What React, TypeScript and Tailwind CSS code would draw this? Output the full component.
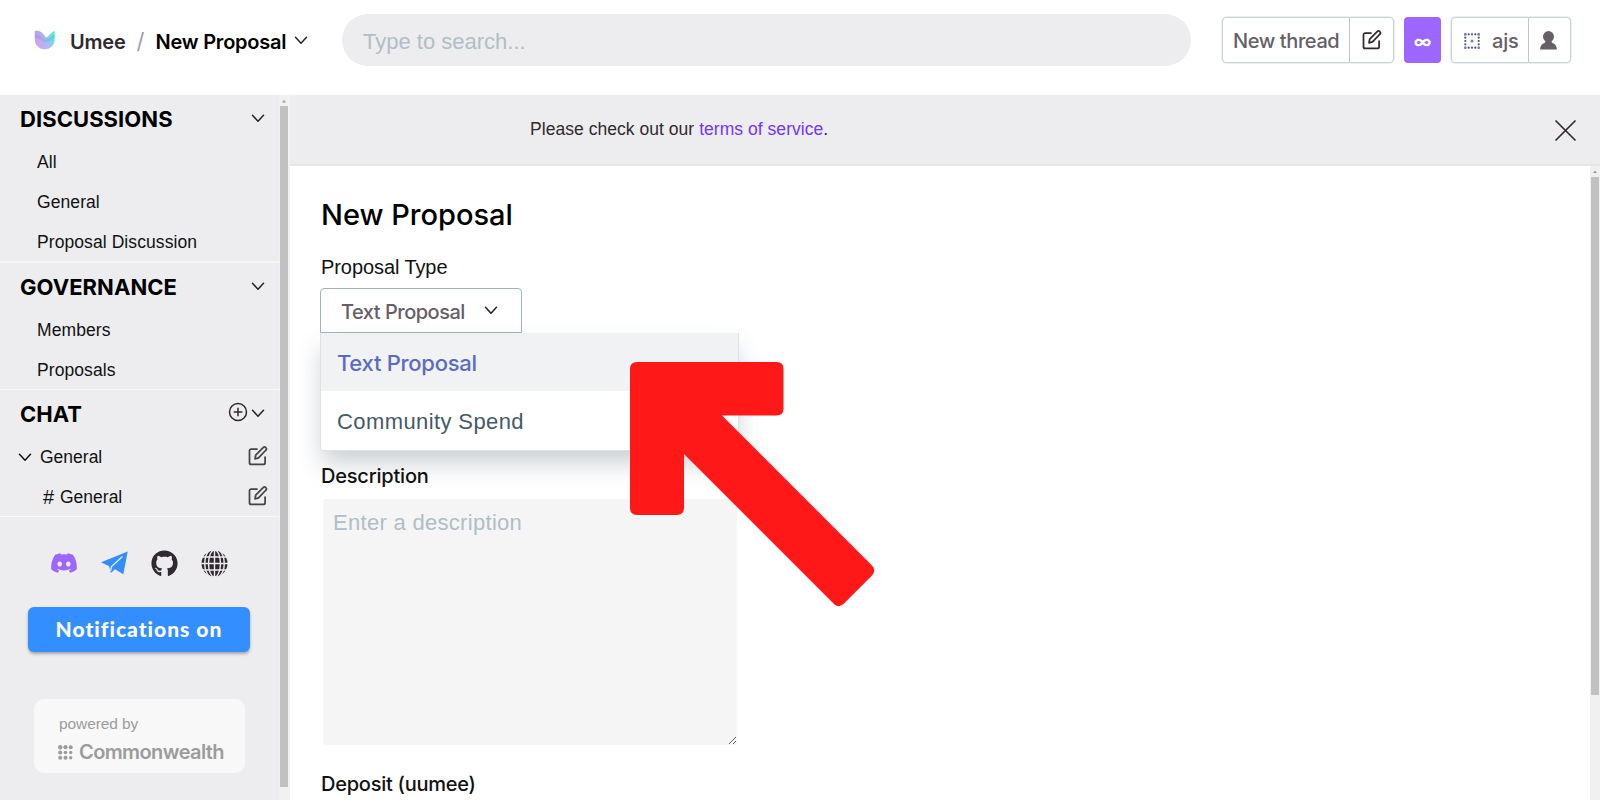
import React from "react";
import { FaDiscord, FaGithub } from "react-icons/fa";

const Chevron = ({ className = "" }: { className?: string }) => (
  <svg className={className} width="14" height="9" viewBox="0 0 14 9" fill="none" stroke="currentColor" strokeWidth="1.5" strokeLinecap="round" strokeLinejoin="round">
    <path d="M1.500 1.300 7 7.200l5.500-5.900" />
  </svg>
);

const EditIcon = ({ className = "" }: { className?: string }) => (
  <svg className={className} width="20" height="20" viewBox="0 0 20 20" fill="none" stroke="currentColor" strokeWidth="1.750" strokeLinecap="round" strokeLinejoin="round">
    <path d="M9 3H3.200A1.700 1.700 0 0 0 1.500 4.700v12A1.700 1.700 0 0 0 3.200 18.400h12.200a1.700 1.700 0 0 0 1.700-1.700V11" />
    <path d="M7 12.800l.7-3.700 7.700-7.700a1.500 1.500 0 0 1 2.200 0l.4.4a1.500 1.500 0 0 1 0 2.200L10.500 11.900z" />
  </svg>
);

const UmeeLogo = () => (
  <svg width="22" height="20" viewBox="0 0 22 20">
    <defs>
      <linearGradient id="umee" x1="0" y1="0" x2="1" y2="0.100">
        <stop offset="0" stopColor="#c39bec" />
        <stop offset="0.5" stopColor="#a9b4f0" />
        <stop offset="0.85" stopColor="#62e6e0" />
        <stop offset="1" stopColor="#4df0dc" />
      </linearGradient>
    </defs>
    <path d="M.8 1C6 .2 9 3 12 7.500 15 7 17 1.500 20.700 1v7.500C20.700 15 16.500 19.300 10.800 19.300S.8 15 .8 8.500z" fill="url(#umee)" />
    <path d="M.8 8.500C5 7.500 8 13 12 13c3.500 0 6-2.500 8.500-3-.6 5.500-4.600 9.300-9.700 9.300C5 19.300.8 15 .8 8.500z" fill="#d9a6f7" opacity=".5" />
    <path d="M.8 4.500C5 3.500 8 9.500 12 9.800c3.200.1 5.500-3.500 8.600-5.300v3.200c-3.100 1-5.200 4.200-8.400 4.100C8 11.500 5 6.500.8 7.500z" fill="#8f93d4" opacity=".4" />
  </svg>
);

const PaperPlane = () => (
  <svg width="27" height="24" viewBox="0 0 27 24">
    <path d="M0 11.200 26.700.5 22.300 23.200 14 18.300 9.800 22 8.200 15.200z" fill="#338fff" />
    <path d="M9.700 20 10.500 15.600 21.500 5.500" fill="none" stroke="#ededef" strokeWidth="1.200" />
  </svg>
);

const Globe = () => (
  <svg width="27" height="27" viewBox="0 0 27 27">
    <circle cx="13.500" cy="13.500" r="13" className="fill-[#30292f]" />
    <g fill="none" stroke="#ededef" strokeWidth="1.400">
      <path d="M13.500 0v27M0 13.500h27M1 7h25M1 20h25" />
      <ellipse cx="13.500" cy="13.500" rx="6" ry="13.500" />
      <path d="M9 0C2 6 2 21 9 27M18 0c7 6 7 21 0 27" />
    </g>
  </svg>
);

const AccountGlyph = () => (
  <svg width="16" height="16" viewBox="0 0 16 16">
    {[1.3, 4.7, 8, 11.3, 14.7].flatMap((x) =>
      [1.3, 4.7, 8, 11.3, 14.7].map((y) => {
        const edge = x < 2 || x > 14 || y < 2 || y > 14;
        const corner = (x < 2 || x > 14) && (y < 2 || y > 14);
        const center = x === 8 && y === 8;
        if (!edge && !center) return null;
        return <circle key={`${x}-${y}`} cx={x} cy={y} r={corner || center ? 1.5 : 1.1} fill={corner || center ? "#7a7de0" : "#55535e"} />;
      }),
    )}
  </svg>
);

const Person = () => (
  <svg width="17" height="19" viewBox="0 0 17 19" className="fill-[#666066]">
    <circle cx="8.500" cy="5.600" r="5.500" />
    <path d="M5.800 8h5.400c0 3 .5 3.800 2.500 4.600 2 .9 3 2.900 3.200 6H.1c.2-3.100 1.200-5.100 3.200-6C5.300 11.800 5.800 11 5.800 8z" />
  </svg>
);

const DotGrid = () => (
  <svg width="15" height="15" viewBox="0 0 15 15" fill="#9c9c9c">
    <circle cx="2.200" cy="2.200" r="2.200" /><circle cx="7.500" cy="2.200" r="2.100" /><circle cx="12.700" cy="2.200" r="2" />
    <circle cx="2.200" cy="7.500" r="2.100" /><circle cx="7.500" cy="7.500" r="1.800" /><circle cx="12.700" cy="7.500" r="1.700" />
    <circle cx="2.200" cy="12.700" r="2" /><circle cx="7.500" cy="12.700" r="2" /><circle cx="12.700" cy="12.700" r="1.700" />
  </svg>
);

function SectionHead({ label, add }: { label: string; add?: boolean }) {
  return (
    <div className="flex h-[47px] items-center pl-5 pr-[14px]">
      <span className="text-[22px] font-bold leading-none tracking-[0.060px] text-black">{label}</span>
      <div className="ml-auto flex items-center gap-[3px]">
        {add && (
          <svg className="-mt-[3px]" width="20" height="20" viewBox="0 0 20 20" fill="none" stroke="#30292f" strokeWidth="1.500" strokeLinecap="round">
            <circle cx="10" cy="10" r="8.500" /><path d="M10 6.200v7.600M6.200 10h7.600" />
          </svg>
        )}
        <Chevron className="text-[#222]" />
      </div>
    </div>
  );
}

const Item = ({ label }: { label: string }) => (
  <div className="flex h-10 items-center pl-[37px] pt-[2px] font-['Liberation_Sans',sans-serif] text-[17.500px] leading-none tracking-[0.080px] text-[#111]">{label}</div>
);

export default function App() {
  return (
    <div className="relative flex h-[800px] w-[1600px] flex-col overflow-hidden bg-white font-['Inter',sans-serif]">
      <header className="flex h-[95px] shrink-0 items-start">
        <div className="flex h-[83px] w-[342px] items-center pl-[34px]">
          <span className="-mt-[3px]"><UmeeLogo /></span>
          <span className="ml-[14px] text-[20px] font-semibold tracking-[-0.200px] text-[#30292f]">Umee</span>
          <span className="ml-[11px] text-[22px] text-[#a09da1]">/</span>
          <span className="ml-[11px] text-[20px] font-semibold tracking-[-0.220px] text-black">New Proposal</span>
          <Chevron className="-mt-[2px] ml-[8px] text-[#222]" />
        </div>
        <div className="mt-[14px] flex h-[52px] w-[849px] items-center rounded-full bg-[#ededef] pl-[21px] pt-[2px] font-['Liberation_Sans',sans-serif] text-[22px] text-[#b0bec5]">
          Type to search...
        </div>
        <div className="ml-[31px] mt-[17px] flex h-[46px] gap-[10px] text-[20px] font-medium text-[#666066]">
          <div className="flex w-[172px] rounded-[4px] border border-[#c9d1d5] shadow-[0_0_0_0.500px_#dde3e6]">
            <div className="flex flex-1 items-center border-r border-[#c0c9ce] pl-[10px] pt-[2px]"><span className="tracking-[-0.400px]">New thread</span></div>
            <div className="flex w-[43px] items-center justify-center text-[#30292f]"><EditIcon /></div>
          </div>
          <div className="flex w-[37px] items-center justify-center rounded-[4px] bg-[#9d66ff] pt-[2px] text-[18px] font-bold text-white">∞</div>
          <div className="flex w-[120px] rounded-[4px] border border-[#c9d1d5] shadow-[0_0_0_0.500px_#dde3e6]">
            <div className="flex flex-1 items-center border-r border-[#c0c9ce] pl-[12px] pt-[2px]"><AccountGlyph /><span className="ml-[12px] tracking-[-0.200px]">ajs</span></div>
            <div className="flex w-[41px] items-center justify-center pr-[2px]"><Person /></div>
          </div>
        </div>
      </header>
      <div className="flex min-h-0 flex-1">
        <aside className="flex w-[279px] shrink-0 flex-col bg-[#ededef]">
          <section className="h-[168px] border-b-2 border-[#f5f5f6]">
            <SectionHead label="DISCUSSIONS" />
            <Item label="All" /><Item label="General" /><Item label="Proposal Discussion" />
          </section>
          <section className="h-[127px] border-b border-[#f8f8f9]">
            <SectionHead label="GOVERNANCE" />
            <Item label="Members" /><Item label="Proposals" />
          </section>
          <section className="h-[127px] border-b border-[#f8f8f9]">
            <SectionHead label="CHAT" add />
            <div className="flex h-10 items-center pl-[18px] pr-[11px] font-['Liberation_Sans',sans-serif] text-[17.500px] text-[#111]"><Chevron /><span className="ml-[8px]">General</span><EditIcon className="-mt-[2px] ml-auto text-[#444]" /></div>
            <div className="flex h-10 items-center pl-[43px] pr-[11px] font-['Liberation_Sans',sans-serif] text-[17.500px] text-[#111]"><span className="w-[12px] text-[20px]">#</span><span className="ml-[5px]">General</span><EditIcon className="-mt-[2px] ml-auto text-[#444]" /></div>
          </section>
          <div className="mt-[32px] flex items-center pl-[50px]">
            <FaDiscord className="size-[28px] text-[#9d66ff]" />
            <span className="ml-[23px]"><PaperPlane /></span>
            <FaGithub className="ml-[23px] size-[27px] text-[#30292f]" />
            <span className="ml-[23px]"><Globe /></span>
          </div>
          <div className="ml-[28px] mt-[30px] flex h-[45px] w-[222px] items-center justify-center rounded-[6px] bg-[#338fff] font-['Lato',sans-serif] text-[21px] font-black tracking-[1px] text-white shadow-[0_2px_3px_rgba(0,0,0,0.3)]">
            <span className="-mt-[2px]">Notifications on</span>
          </div>
          <div className="ml-[34px] mt-[47px] flex h-[74px] w-[211px] flex-col rounded-[10px] bg-[#f8f8f8] pl-[24px] pt-[15px] text-[#9c9c9c]">
            <span className="pl-px font-['Liberation_Sans',sans-serif] text-[15.500px] leading-[20px] tracking-[-0.100px]">powered by</span>
            <div className="mt-[7px] flex items-center gap-[6px] text-[20px] font-semibold leading-[22px] tracking-[-0.600px]"><DotGrid /><span>Commonwealth</span></div>
          </div>
        </aside>
        <div className="flex w-[11px] flex-col items-center bg-[#f1f1f1]">
          <svg width="11" height="11" viewBox="0 0 11 11"><path d="M3 7.500 5 5l2 2.500z" fill="#999" /></svg>
          <div className="mr-[2px] h-[681px] w-[8px] bg-[#c1c1c1]" />
        </div>
        <main className="flex min-w-0 flex-1 flex-col">
          <div className="flex h-[71px] shrink-0 items-center border-b-2 border-[#e6e6e8] bg-[#ededef] pl-[240px] pr-[24px] text-[17.500px] text-[#30292f]">
            <span className="font-['Liberation_Sans',sans-serif] tracking-[0.040px]">Please check out our <span className="text-[#7535f5]">terms of service</span>.</span>
            <svg className="ml-auto mt-[2px]" width="21" height="21" viewBox="0 0 21 21" stroke="#30292f" strokeWidth="1.700" strokeLinecap="round"><path d="M1 1l19 19M20 1 1 20" /></svg>
          </div>
          <div className="flex min-h-0 flex-1">
            <div className="flex min-w-0 flex-1 flex-col pl-[31px]">
              <h1 className="mt-[29px] flex h-[40px] items-center text-[29px] font-medium text-black">New Proposal</h1>
              <label className="mt-[20px] flex h-[24px] items-center font-['Liberation_Sans',sans-serif] text-[20px] tracking-[-0.080px] text-[#111]">Proposal Type</label>
              <div className="relative mt-[9px] -ml-px">
                <div className="flex h-[45px] w-[202px] items-center rounded-t-[4px] border border-[#a3b3bb] bg-white pl-[20px] pt-[3px] text-[20px] font-medium tracking-[-0.500px] text-[#666066]">
                  <span>Text Proposal</span><Chevron className="-mt-[4px] ml-[19px] text-[#222]" />
                </div>
                <div className="absolute left-0 top-[45px] z-10 h-[118px] w-[419px] rounded-b-[3px] border border-t-0 border-[#dfe2e5] bg-white text-[22px] shadow-[0_14px_24px_-2px_rgba(55,71,90,0.26)]">
                  <div className="flex h-[58px] items-center bg-[#f1f2f4] pl-[16px] pt-[2px] font-medium tracking-[-0.280px] text-[#5c6bc0]">Text Proposal</div>
                  <div className="flex h-[59px] items-center pl-[16px] pt-[2px] font-['Liberation_Sans',sans-serif] tracking-[0.400px] text-[#455a64]">Community Spend</div>
                </div>
              </div>
              <label className="mt-[131px] flex h-[24px] items-center text-[20px] font-medium tracking-[-0.200px] text-[#111]"><span className="relative z-20">Description</span></label>
              <textarea className="relative z-20 ml-[2px] mt-[11px] h-[246px] w-[414px] shrink-0 rounded-[3px] bg-[#f5f5f5] px-[10px] py-[10px] font-['Liberation_Sans',sans-serif] text-[22px] leading-[28px] tracking-[0.300px] placeholder:text-[#b0bec5]" placeholder="Enter a description" />
              <label className="mt-[27px] flex h-[24px] items-center text-[20px] font-medium tracking-[-0.250px] text-[#111]">Deposit (uumee)</label>
            </div>
            <div className="flex w-[10px] flex-col items-center bg-[#f0f0f0]">
              <svg width="10" height="11" viewBox="0 0 10 11"><path d="M3 7 5 4.500 7 7z" fill="#999" /></svg>
              <div className="h-[518px] w-[8px] bg-[#c1c1c1]" />
            </div>
          </div>
        </main>
      </div>
      <svg className="absolute left-[620px] top-[350px] z-30" width="270" height="270" viewBox="620 350 270 270">
        <path fill="#ff1818" d="M637 362H776.500Q783.500 362 783.500 369V408.500Q783.500 415.500 776.500 415.500H722L872 565.500Q876.500 570.500 872 575.500L843.500 604Q839 608 834.500 604.500L684 454V507.500Q684 515 677 515H637Q630 515 630 508V369Q630 362 637 362Z" />
      </svg>
    </div>
  );
}
